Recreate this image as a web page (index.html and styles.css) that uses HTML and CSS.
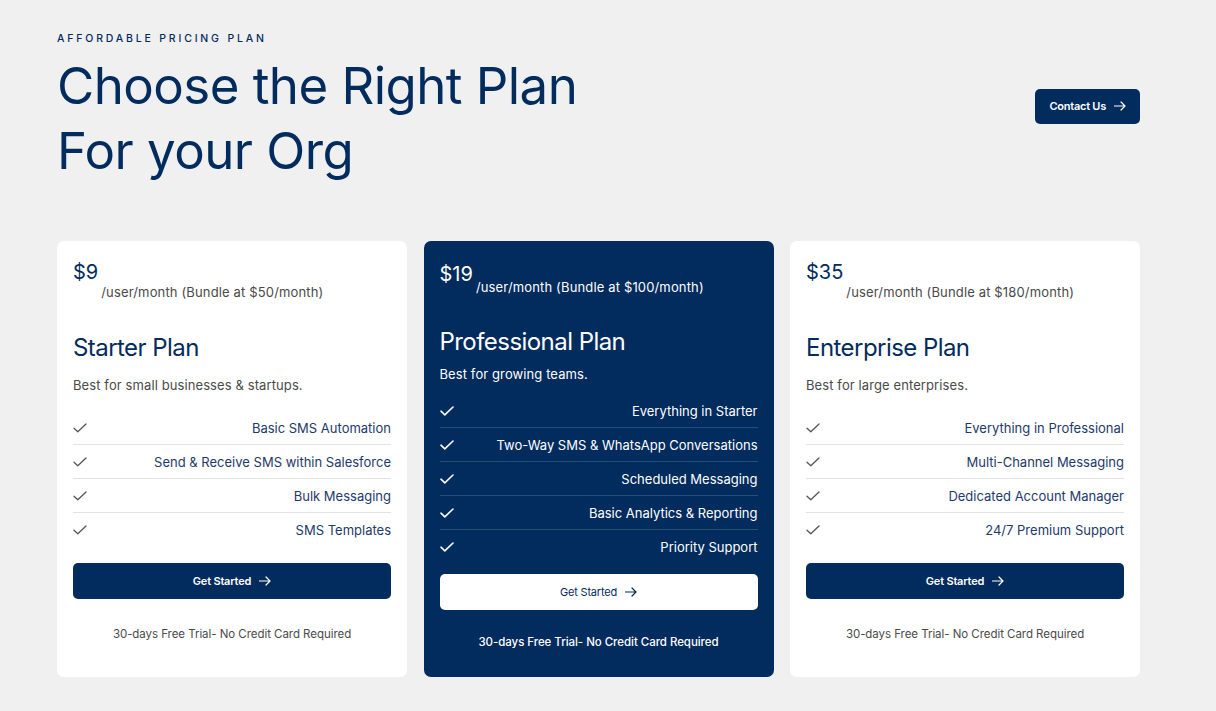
FILE: index.html
```html
<!DOCTYPE html>
<html lang="en">
<head>
<meta charset="utf-8">
<title>Pricing</title>
<link rel="stylesheet" href="styles.css">
</head>
<body>
<main class="page">
  <header class="hero">
    <div class="hero-text">
      <p class="eyebrow">AFFORDABLE PRICING PLAN</p>
      <h1 class="headline">Choose the Right Plan<br>For your Org</h1>
    </div>
    <a class="contact-btn" href="#">Contact Us
      <svg class="arrow" viewBox="0 0 12 10" width="12" height="10"><path d="M0.5 5H11M7 1l4 4-4 4" fill="none" stroke="currentColor" stroke-width="1.2" stroke-linecap="round" stroke-linejoin="round"/></svg>
    </a>
  </header>

  <section class="plans">
    <article class="card">
      <div class="price"><span class="amount">$9</span><span class="per">/user/month (Bundle at $50/month)</span></div>
      <h2 class="plan-name">Starter Plan</h2>
      <p class="plan-desc">Best for small businesses &amp; startups.</p>
      <ul class="features">
        <li><svg class="check" viewBox="0 0 14 10" width="14" height="10"><path d="M1 5.2l3.8 3.6L13 1" fill="none" stroke="currentColor" stroke-width="1.3" stroke-linecap="round" stroke-linejoin="round"/></svg><span>Basic SMS Automation</span></li>
        <li><svg class="check" viewBox="0 0 14 10" width="14" height="10"><path d="M1 5.2l3.8 3.6L13 1" fill="none" stroke="currentColor" stroke-width="1.3" stroke-linecap="round" stroke-linejoin="round"/></svg><span>Send &amp; Receive SMS within Salesforce</span></li>
        <li><svg class="check" viewBox="0 0 14 10" width="14" height="10"><path d="M1 5.2l3.8 3.6L13 1" fill="none" stroke="currentColor" stroke-width="1.3" stroke-linecap="round" stroke-linejoin="round"/></svg><span>Bulk Messaging</span></li>
        <li><svg class="check" viewBox="0 0 14 10" width="14" height="10"><path d="M1 5.2l3.8 3.6L13 1" fill="none" stroke="currentColor" stroke-width="1.3" stroke-linecap="round" stroke-linejoin="round"/></svg><span>SMS Templates</span></li>
      </ul>
      <a class="cta" href="#">Get Started <svg class="arrow" viewBox="0 0 12 10" width="12" height="10"><path d="M0.5 5H11M7 1l4 4-4 4" fill="none" stroke="currentColor" stroke-width="1.2" stroke-linecap="round" stroke-linejoin="round"/></svg></a>
      <p class="trial">30-days Free Trial- No Credit Card Required</p>
    </article>

    <article class="card card--featured">
      <div class="price"><span class="amount">$19</span><span class="per">/user/month (Bundle at $100/month)</span></div>
      <h2 class="plan-name">Professional Plan</h2>
      <p class="plan-desc">Best for growing teams.</p>
      <ul class="features">
        <li><svg class="check" viewBox="0 0 14 10" width="14" height="10"><path d="M1 5.2l3.8 3.6L13 1" fill="none" stroke="currentColor" stroke-width="1.6" stroke-linecap="round" stroke-linejoin="round"/></svg><span>Everything in Starter</span></li>
        <li><svg class="check" viewBox="0 0 14 10" width="14" height="10"><path d="M1 5.2l3.8 3.6L13 1" fill="none" stroke="currentColor" stroke-width="1.6" stroke-linecap="round" stroke-linejoin="round"/></svg><span>Two-Way SMS &amp; WhatsApp Conversations</span></li>
        <li><svg class="check" viewBox="0 0 14 10" width="14" height="10"><path d="M1 5.2l3.8 3.6L13 1" fill="none" stroke="currentColor" stroke-width="1.6" stroke-linecap="round" stroke-linejoin="round"/></svg><span>Scheduled Messaging</span></li>
        <li><svg class="check" viewBox="0 0 14 10" width="14" height="10"><path d="M1 5.2l3.8 3.6L13 1" fill="none" stroke="currentColor" stroke-width="1.6" stroke-linecap="round" stroke-linejoin="round"/></svg><span>Basic Analytics &amp; Reporting</span></li>
        <li><svg class="check" viewBox="0 0 14 10" width="14" height="10"><path d="M1 5.2l3.8 3.6L13 1" fill="none" stroke="currentColor" stroke-width="1.6" stroke-linecap="round" stroke-linejoin="round"/></svg><span>Priority Support</span></li>
      </ul>
      <a class="cta" href="#">Get Started <svg class="arrow" viewBox="0 0 12 10" width="12" height="10"><path d="M0.5 5H11M7 1l4 4-4 4" fill="none" stroke="currentColor" stroke-width="1.2" stroke-linecap="round" stroke-linejoin="round"/></svg></a>
      <p class="trial">30-days Free Trial- No Credit Card Required</p>
    </article>

    <article class="card">
      <div class="price"><span class="amount">$35</span><span class="per">/user/month (Bundle at $180/month)</span></div>
      <h2 class="plan-name">Enterprise Plan</h2>
      <p class="plan-desc">Best for large enterprises.</p>
      <ul class="features">
        <li><svg class="check" viewBox="0 0 14 10" width="14" height="10"><path d="M1 5.2l3.8 3.6L13 1" fill="none" stroke="currentColor" stroke-width="1.3" stroke-linecap="round" stroke-linejoin="round"/></svg><span>Everything in Professional</span></li>
        <li><svg class="check" viewBox="0 0 14 10" width="14" height="10"><path d="M1 5.2l3.8 3.6L13 1" fill="none" stroke="currentColor" stroke-width="1.3" stroke-linecap="round" stroke-linejoin="round"/></svg><span>Multi-Channel Messaging</span></li>
        <li><svg class="check" viewBox="0 0 14 10" width="14" height="10"><path d="M1 5.2l3.8 3.6L13 1" fill="none" stroke="currentColor" stroke-width="1.3" stroke-linecap="round" stroke-linejoin="round"/></svg><span>Dedicated Account Manager</span></li>
        <li><svg class="check" viewBox="0 0 14 10" width="14" height="10"><path d="M1 5.2l3.8 3.6L13 1" fill="none" stroke="currentColor" stroke-width="1.3" stroke-linecap="round" stroke-linejoin="round"/></svg><span>24/7 Premium Support</span></li>
      </ul>
      <a class="cta" href="#">Get Started <svg class="arrow" viewBox="0 0 12 10" width="12" height="10"><path d="M0.5 5H11M7 1l4 4-4 4" fill="none" stroke="currentColor" stroke-width="1.2" stroke-linecap="round" stroke-linejoin="round"/></svg></a>
      <p class="trial">30-days Free Trial- No Credit Card Required</p>
    </article>
  </section>
</main>
</body>
</html>
```

FILE: styles.css
```css
* { box-sizing: border-box; }

html, body {
  margin: 0;
  padding: 0;
  background: #f0f0f0;
}

body {
  font-family: Inter, "Noto Sans", sans-serif;
  color: #022b5e;
}

.page {
  width: 1083px;
  margin-left: 57px;
  padding-top: 31px;
}

.hero {
  display: flex;
  align-items: center;
  justify-content: space-between;
}

.eyebrow {
  margin: 0;
  font-size: 10.5px;
  font-weight: 500;
  letter-spacing: 2.82px;
  line-height: 16px;
  color: #022b5e;
}

.headline {
  margin: 6px 0 0;
  font-size: 51px;
  font-weight: 400;
  line-height: 65px;
  letter-spacing: -0.55px;
  color: #022b5e;
}

.contact-btn {
  display: inline-flex;
  align-items: center;
  gap: 8px;
  height: 35px;
  padding: 0 14px 0 15px;
  background: #022b5e;
  color: #fff;
  border-radius: 5px;
  font-size: 11px;
  font-weight: 600;
  letter-spacing: -0.25px;
  text-decoration: none;
  margin-bottom: 2px;
}

.plans {
  display: grid;
  grid-template-columns: repeat(3, 350px);
  column-gap: 16.5px;
  margin-top: 58px;
}

.card {
  background: #fff;
  border-radius: 7px;
  padding: 17px 16px 0;
  height: 436px;
  display: flex;
  flex-direction: column;
}

.price {
  display: flex;
  align-items: flex-start;
  gap: 3px;
}

.amount {
  font-size: 20px;
  line-height: 28px;
  color: #022b5e;
}

.per {
  margin-top: 25px;
  font-size: 13px;
  line-height: 18px;
  letter-spacing: 0.15px;
  color: #4a4a4a;
}

.plan-name {
  margin: 32px 0 0;
  font-size: 24px;
  font-weight: 400;
  line-height: 30px;
  letter-spacing: -0.55px;
  color: #022b5e;
}

.plan-desc {
  margin: 13px 0 0;
  font-size: 13px;
  line-height: 18px;
  letter-spacing: 0.1px;
  color: #4a4a4a;
}

.features {
  list-style: none;
  margin: 17px 0 0;
  padding: 0;
}

.features li {
  display: flex;
  align-items: center;
  justify-content: space-between;
  height: 34px;
  border-bottom: 1px solid #e3e3e3;
  font-size: 13px;
  color: #1e3a6a;
}

.features li:last-child {
  border-bottom: none;
}

.check {
  color: #555;
  flex: none;
}

.cta {
  display: flex;
  align-items: center;
  justify-content: center;
  gap: 8px;
  height: 36px;
  margin-top: 16px;
  background: #022b5e;
  color: #fff;
  border-radius: 5px;
  font-size: 11px;
  font-weight: 600;
  letter-spacing: -0.2px;
  text-decoration: none;
}

.trial {
  margin: 27px 0 0;
  text-align: center;
  font-size: 11.5px;
  line-height: 16px;
  letter-spacing: -0.05px;
  color: #4a4a4a;
}

/* Featured card */
.card--featured {
  background: #022b5e;
  padding-top: 19px;
}

.card--featured .amount,
.card--featured .plan-name {
  color: #fff;
}

.card--featured .per {
  margin-top: 18px;
  color: #fff;
}

.card--featured .plan-name {
  margin-top: 31px;
}

.card--featured .plan-desc {
  margin-top: 8px;
  color: #fff;
}

.card--featured .features {
  margin-top: 11px;
}

.card--featured .features li {
  color: #fff;
  border-bottom-color: rgba(255, 255, 255, 0.16);
}

.card--featured .check {
  color: #fff;
}

.card--featured .cta {
  margin-top: 10px;
  background: #fff;
  color: #022b5e;
  font-weight: 400;
}

.card--featured .trial {
  margin-top: 24px;
  color: #fff;
  font-weight: 500;
}
```
